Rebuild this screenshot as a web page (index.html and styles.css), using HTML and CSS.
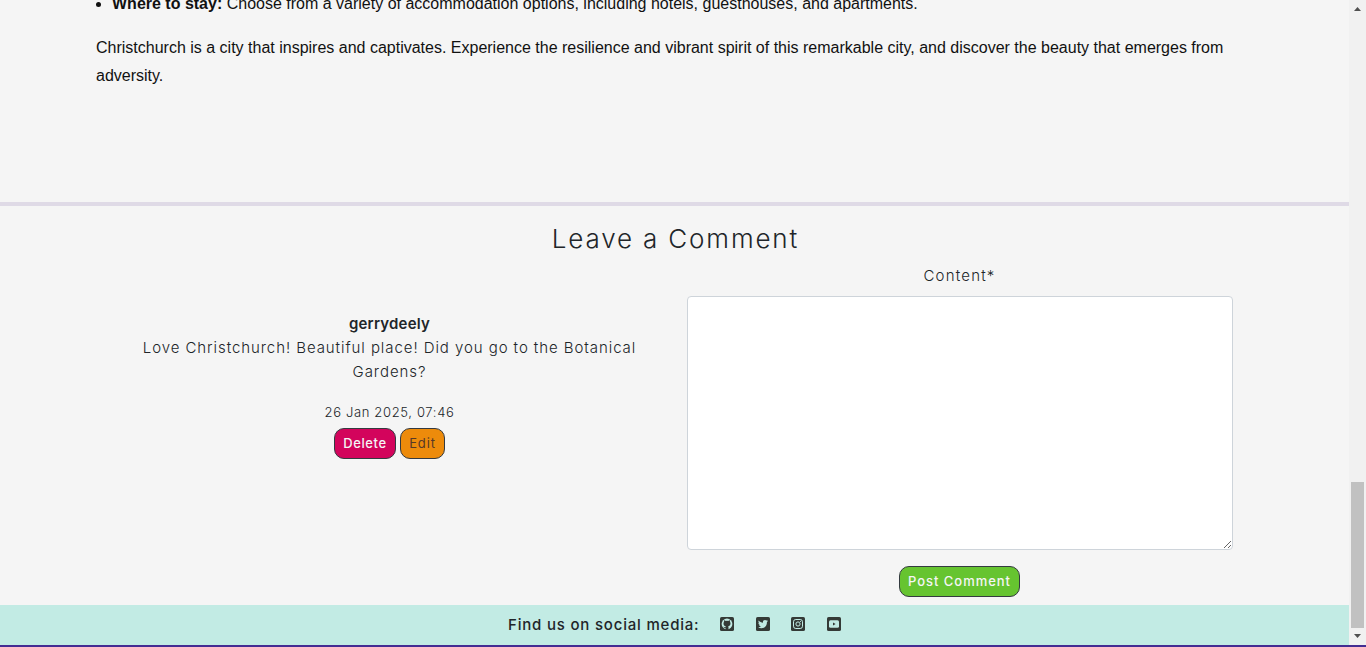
FILE: index.html
```html
<!DOCTYPE html>
<html lang="en">
<head>
<meta charset="utf-8">
<title>Christchurch</title>
<link rel="stylesheet" href="styles.css">
</head>
<body>
<div class="window">
<div class="page">
  <article class="post">
    <ul class="post-list"><li><strong>Where to stay:</strong> <span class="stay">Choose from a variety of accommodation options, including hotels, guesthouses, and apartments.</span></li></ul>
    <p class="post-text">Christchurch is a city that inspires and captivates. Experience the resilience and vibrant spirit of this remarkable city, and discover the beauty that emerges from<br>adversity.</p>
  </article>
  <section class="comments">
    <h3 class="title"><span class="title-text">Leave a Comment</span></h3>
    <div class="row">
      <div class="comment">
        <div class="author"><span class="author-name">gerrydeely</span></div>
        <p class="body"><span class="body-text">Love Christchurch! Beautiful place! Did you go to the Botanical<br>Gardens?</span></p>
        <div class="date"><span class="date-text">26 Jan 2025, 07:46</span></div>
        <div class="actions"><button class="btn delete">Delete</button><button class="btn edit">Edit</button></div>
      </div>
      <form class="form">
        <label class="label" for="content"><span class="label-text">Content*</span></label>
        <textarea class="field" id="content"></textarea>
        <button class="btn submit" type="button">Post Comment</button>
      </form>
    </div>
  </section>
  <footer class="footer">
    <span class="find">Find us on social media:</span>
    <div class="social">
      <svg class="icon" viewBox="0 0 14 14"><rect width="14" height="14" rx="1.6" fill="#343a36"/><circle cx="7" cy="7" r="5.400" fill="#c2ebe4"/><path d="M5.500 13v-2.300c-1.500.3-1.900-.7-2.400-1 .9-.1 1.100.6 2.400.3l.3-.8C4.100 8.900 3.500 8.200 3.500 6.500c0-.7.2-1.200.6-1.700-.2-.5-.1-1 .1-1.500.6 0 1.100.3 1.500.6a6 6 0 0 1 2.600 0c.4-.3.9-.6 1.500-.6.2.5.3 1 .1 1.500.4.500.6 1 .6 1.700 0 1.700-.8 2.400-2.400 2.700.3.300.4.700.4 1.200V13z" fill="#343a36"/></svg>
      <svg class="icon" viewBox="0 0 14 14"><rect width="14" height="14" rx="1.6" fill="#343a36"/><path d="M12 4.100l-1.100 1.100c.1 3.500-2.500 6-5.500 6-1.200 0-2.300-.3-3.300-.9 1.100.1 2.100-.2 2.900-.8-.9 0-1.600-.6-1.900-1.400h.9C3 7.900 2.400 7.100 2.400 6.100l.9.200C2.400 5.600 2.200 4.400 2.700 3.500c1.100 1.300 2.600 2.100 4.300 2.200C6.600 4 7.600 2.900 9 2.900c.6 0 1.100.2 1.500.6l1.300-.4-.9 1.200z" fill="#c2ebe4"/></svg>
      <svg class="icon" viewBox="0 0 14 14"><rect width="14" height="14" rx="1.6" fill="#343a36"/><g fill="none" stroke="#c2ebe4" stroke-width="1"><rect x="2.500" y="2.500" width="9" height="9" rx="2.300"/><circle cx="7" cy="7" r="2.100"/></g><circle cx="9.500" cy="4.500" r=".6" fill="#c2ebe4"/></svg>
      <svg class="icon" viewBox="0 0 14 14"><rect width="14" height="14" rx="1.600" fill="#343a36"/><rect x="2" y="3.200" width="10" height="7.600" rx="1.500" fill="#c2ebe4"/><path d="M6 5.500v3L8.600 7z" fill="#343a36"/></svg>
    </div>
  </footer>
</div>
<div class="scrollbar">
  <svg class="arrow" viewBox="0 0 17 17"><path d="M5 11h7L8.500 7z"/></svg>
  <div class="thumb"></div>
  <svg class="arrow" viewBox="0 0 17 17"><path d="M5 6h7l-3.500 4z"/></svg>
</div>
</div>
</body>
</html>
```
FILE: styles.css
```css
* { box-sizing: border-box; }
body { margin: 0; background: #f5f5f5; color: #212529; font: 15px/24px Inter, "Noto Sans", sans-serif; }
.window { display: flex; height: 647px; overflow: hidden; border-bottom: 2px solid #432d92; }
.page { flex: 1; display: flex; flex-direction: column; height: 645px; overflow: hidden; }
.post { flex: none; height: 206px; padding: 0 96px; border-bottom: 4px solid #dfdae6; color: #111; font-family: "Liberation Sans", Arial, sans-serif; font-size: 16px; line-height: 28px; }
.post-list { margin: -10px 0 16px; padding-left: 16px; }
.post-text { margin: 0; white-space: nowrap; }
.comments { height: 399px; text-align: center; }
.title { margin: 0; padding-top: 16px; height: 58px; font-size: 26px; line-height: 34px; font-weight: 300; }
.title-text { letter-spacing: 1.85px; margin-right: -1.85px; }
.row { display: grid; grid-template-columns: 546px 546px; column-gap: 24px; justify-content: center; }
.comment { padding-top: 48px; font-weight: 300; }
.author-name { font-weight: 600; letter-spacing: .2px; }
.body { margin: 0 0 16px; white-space: nowrap; }
.body-text { letter-spacing: .93px; }
.date { font-size: 13px; height: 25px; line-height: 25px; }
.date-text { letter-spacing: .65px; }
.actions { display: flex; justify-content: center; gap: 4px; margin-top: 3px; }
.btn { height: 31px; padding: 0; border: 1px solid #343a40; border-radius: 10px; font: 500 13px/21px Inter, sans-serif; color: #f5f5f5; white-space: nowrap; }
.delete { width: 62px; background: #d3045c; letter-spacing: .6px; }
.edit { width: 45px; background: #ed8b0b; color: #573927; font-weight: 400; letter-spacing: .85px; }
.form { display: flex; flex-direction: column; align-items: center; font-weight: 300; }
.label { height: 32px; }
.label-text { letter-spacing: 1.2px; }
.field { width: 546px; height: 254px; border: 1px solid #ced4da; border-radius: 4px; background: #fff; resize: both; }
.submit { width: 121px; margin-top: 16px; background: #66c430; letter-spacing: .95px; }
.footer { flex: none; height: 40px; padding-bottom: 1px; background: #c2ebe4; display: flex; justify-content: center; align-items: center; gap: 21px; }
.find { font-weight: 500; letter-spacing: .8px; white-space: nowrap; }
.social { display: flex; gap: 21.500px; padding-bottom: 1px; }
.icon { width: 14px; height: 14px; }
.scrollbar { width: 17px; height: 645px; background: #f1f1f1; display: flex; flex-direction: column; align-items: center; }
.arrow { width: 17px; height: 17px; fill: #505050; }
.thumb { width: 13px; height: 146px; margin-top: auto; background: #c1c1c1; }
```
